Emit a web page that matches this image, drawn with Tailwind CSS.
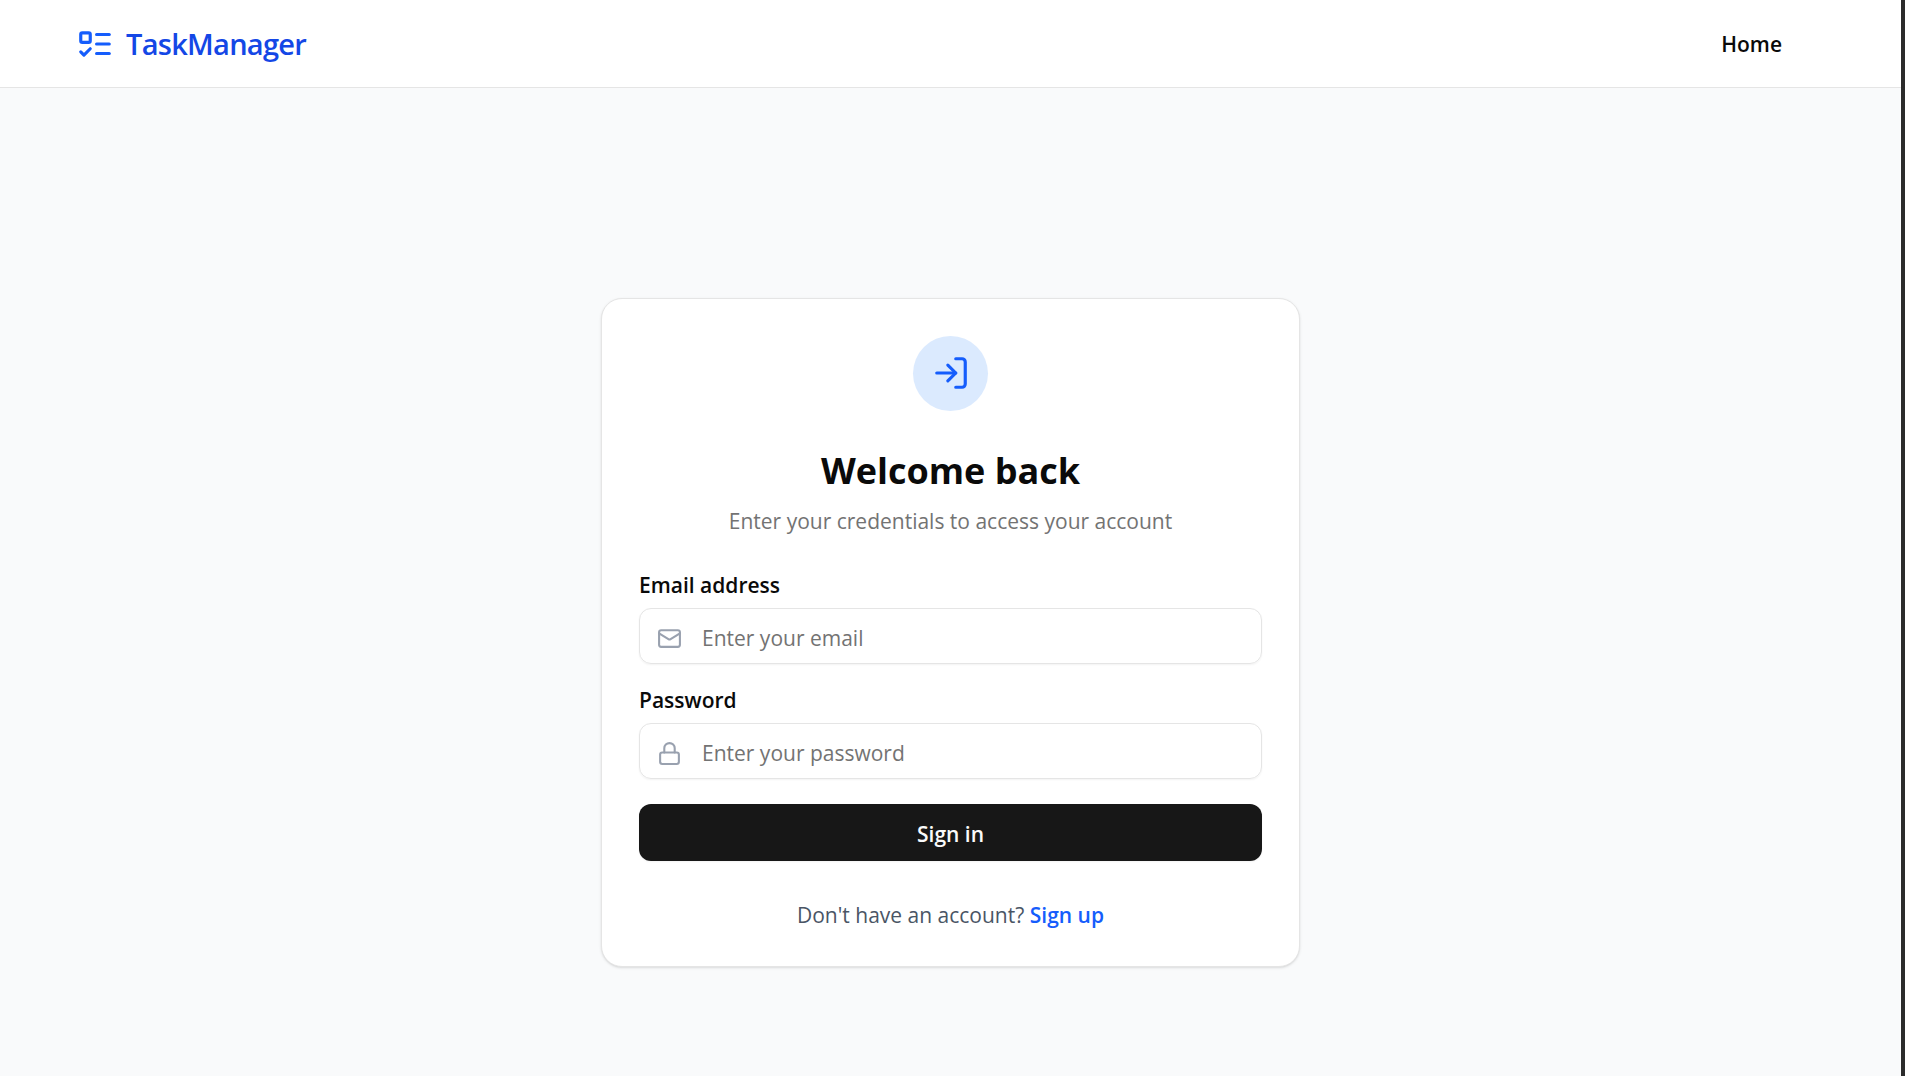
<!DOCTYPE html>
<html lang="en">
  <head>
    <meta charset="UTF-8" />
    <meta name="viewport" content="width=device-width, initial-scale=1.0" />
    <title>TaskManager - Sign in</title>
    <script src="https://cdn.jsdelivr.net/npm/@tailwindcss/browser@4"></script>
  </head>
  <body
    class="flex min-h-screen flex-col border-r-4 border-[#2b2b2b] bg-gray-50 font-['Segoe_UI','Open_Sans',sans-serif] text-[21px] leading-7 text-neutral-950"
  >
    <header
      class="flex h-22 items-center justify-between border-b border-neutral-200 bg-white px-19"
    >
      <a href="#" class="flex items-center gap-3 text-blue-600">
        <svg
          class="size-[38px]"
          viewBox="0 0 24 24"
          fill="none"
          stroke="currentColor"
          stroke-width="2"
          stroke-linecap="round"
          stroke-linejoin="round"
          aria-hidden="true"
        >
          <rect x="3" y="5" width="6" height="6" rx="1" />
          <path d="m3 17 2 2 4-4" />
          <path d="M13 6h8" />
          <path d="M13 12h8" />
          <path d="M13 18h8" />
        </svg>
        <span class="text-[29px] font-semibold tracking-tight text-blue-700"
          >TaskManager</span
        >
      </a>
      <nav>
        <a href="#" class="px-[43px] font-semibold">Home</a>
      </nav>
    </header>

    <main class="flex flex-1 items-center justify-center px-4 pt-25">
      <div
        class="w-full max-w-[699px] rounded-[21px] border border-neutral-200 bg-white p-[37px] shadow-sm"
      >
        <div class="flex flex-col items-center text-center">
          <div
            class="mb-9 flex size-[75px] items-center justify-center rounded-full bg-blue-100 text-blue-600"
          >
            <svg
              class="size-[38px]"
              viewBox="0 0 24 24"
              fill="none"
              stroke="currentColor"
              stroke-width="2"
              stroke-linecap="round"
              stroke-linejoin="round"
              aria-hidden="true"
            >
              <path d="M15 3h4a2 2 0 0 1 2 2v14a2 2 0 0 1-2 2h-4" />
              <path d="m10 17 5-5-5-5" />
              <path d="M15 12H3" />
            </svg>
          </div>
          <h1 class="mb-3 text-4xl leading-12 font-bold">Welcome back</h1>
          <p class="text-neutral-500">
            Enter your credentials to access your account
          </p>
        </div>

        <form id="loginForm" class="mt-9">
          <div class="mb-[22px]">
            <label for="email" class="mb-[9px] block font-semibold"
              >Email address</label
            >
            <div class="relative">
              <svg
                class="absolute top-[18px] left-[18px] size-[25px] text-gray-400"
                viewBox="0 0 24 24"
                fill="none"
                stroke="currentColor"
                stroke-width="2"
                stroke-linecap="round"
                stroke-linejoin="round"
                aria-hidden="true"
              >
                <rect x="2" y="4" width="20" height="16" rx="2" />
                <path d="m22 7-8.97 5.7a1.94 1.94 0 0 1-2.06 0L2 7" />
              </svg>
              <input
                type="email"
                id="email"
                name="email"
                placeholder="Enter your email"
                class="block h-14 w-full rounded-xl border border-neutral-200 pt-1 pr-4 pl-[62px] shadow-xs placeholder:text-neutral-500 focus:border-blue-600 focus:outline-none"
                required
              />
            </div>
          </div>
          <div class="mb-[25px]">
            <label for="password" class="mb-[9px] block font-semibold"
              >Password</label
            >
            <div class="relative">
              <svg
                class="absolute top-[18px] left-[18px] size-[25px] text-gray-400"
                viewBox="0 0 24 24"
                fill="none"
                stroke="currentColor"
                stroke-width="2"
                stroke-linecap="round"
                stroke-linejoin="round"
                aria-hidden="true"
              >
                <rect x="3" y="11" width="18" height="11" rx="2" />
                <path d="M7 11V7a5 5 0 0 1 10 0v4" />
              </svg>
              <input
                type="password"
                id="password"
                name="password"
                placeholder="Enter your password"
                class="block h-14 w-full rounded-xl border border-neutral-200 pt-1 pr-4 pl-[62px] shadow-xs placeholder:text-neutral-500 focus:border-blue-600 focus:outline-none"
                required
              />
            </div>
          </div>
          <button
            type="submit"
            class="h-[57px] w-full rounded-xl bg-neutral-900 pt-1 font-semibold text-neutral-50 shadow-xs hover:bg-neutral-800"
          >
            Sign in
          </button>
        </form>

        <p class="mt-10 text-center text-gray-600">
          Don't have an account?
          <a href="#" class="font-semibold text-blue-600 hover:underline"
            >Sign up</a
          >
        </p>
      </div>
    </main>
  </body>
</html>
